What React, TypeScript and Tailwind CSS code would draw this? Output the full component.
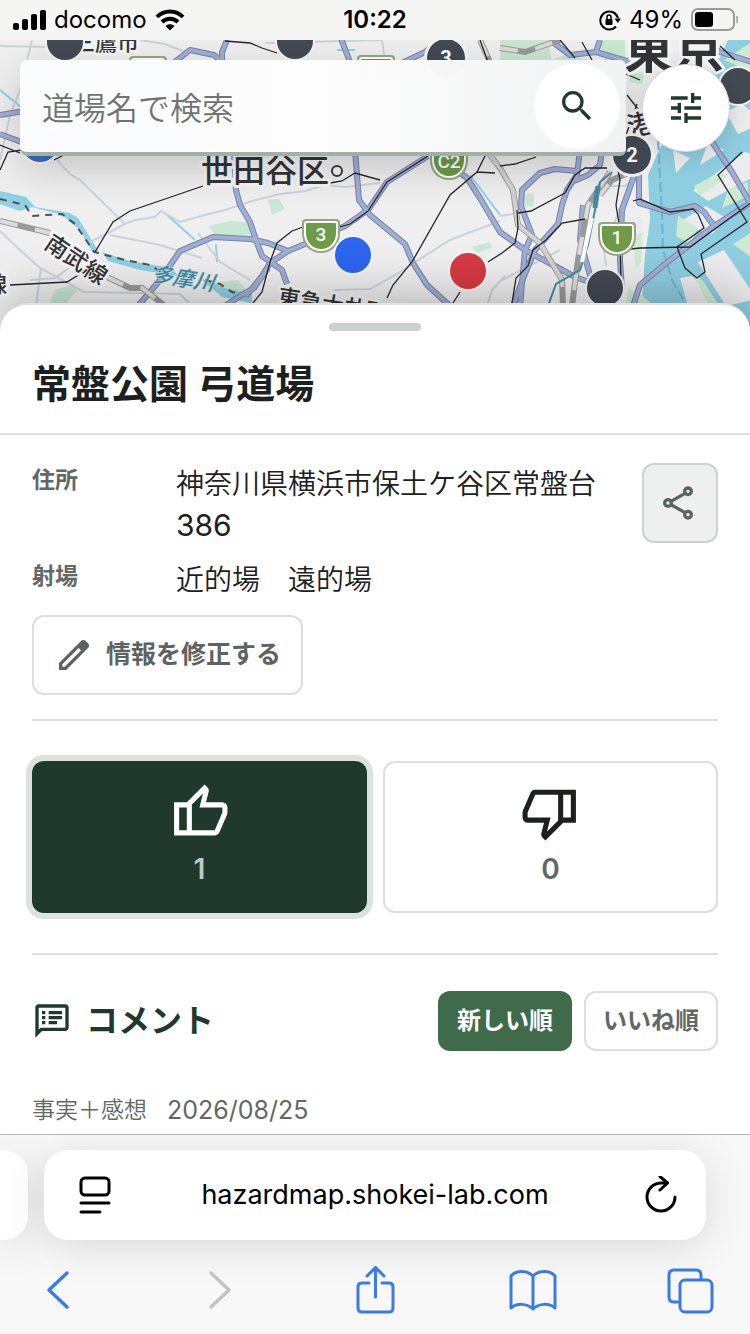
import type { ReactNode } from "react";
import { MdOutlineSpeakerNotes, MdSearch, MdTune } from "react-icons/md";

const highways = [
  "M172 64L190 50L214 55L222 62L222 52L227 40",
  "M0 115L24 111",
  "M0 134L24 143",
  "M340 36L350 62",
  "M400 64L425 52L440 40",
  "M550 40L570 55L596 52L600 40",
  "M596 52L630 62",
  "M700 36L720 52L752 62",
  "M138 306L160 280L180 251L213 237L250 239L268 243L288 251L305 244L345 226L368 210L387 182L428 156",
  "M234 150L236 190L240 205L250 222L256 240L262 256L282 270L287 284",
  "M246 296L262 276L270 263L288 251",
  "M355 150L359 200L370 215L405 244L413 263L427 285L450 306",
  "M225 306L240 296L254 288L268 268",
  "M450 165L467 178L480 198L500 232L525 250L555 266L575 277L592 283",
  "M580 150L577 175L567 190L562 205L558 224L535 250L524 276L513 306",
  "M577 171L555 169L540 173L522 190L521 206L532 235L525 250L520 306",
  "M602 150L600 165L588 175L574 181",
  "M583 205L580 240L590 275L596 290",
  "M634 176L622 210L620 260L622 290",
  "M639 150L639 203L670 212L695 206L704 212L714 226",
  "M752 202L714 226L665 264L640 285L633 306",
  "M712 142L732 172L752 206",
];

const minorRoads = [
  "M32 40L20 90L10 115L0 160",
  "M0 46L50 47",
  "M140 40L165 44L185 52",
  "M265 43L345 41L382 40L385 62",
  "M57 160L70 174L80 180L125 224L135 220L155 217L161 211L180 222L205 215L225 210L252 201L280 194L305 191L325 185L345 187L380 183",
  "M90 242L110 232L125 224",
  "M110 235L160 245L202 258",
  "M198 233L220 262L250 280",
  "M0 231L20 250L40 268L84 292L140 293L180 294L190 304",
  "M36 306L41 268M30 280L55 278L85 256",
  "M325 306L335 290L370 289L395 275L450 240L500 221",
  "M500 216L520 213M500 281L560 250",
  "M487 306L492 290L505 276",
  "M604 186L612 186L625 186L630 182L604 250L606 266",
];

const railLines = [
  "M225 41L250 43L262 48L277 53",
  "M0 170L8 152L22 150M0 145L20 153M54 160L64 155",
  "M95 252L113 222L130 211L203 186",
  "M10 285L67 282L80 274",
  "M253 303L262 292L270 262L277 243L292 231L303 227",
  "M340 227L350 224L368 211L387 182L428 156",
  "M330 183L342 181L355 173L380 180",
  "M387 298L393 285L412 262L450 195L477 172L487 152M477 172L495 173",
  "M453 303L460 292M488 262L502 253L515 243L518 228L517 210",
  "M500 166L515 164L536 157",
  "M518 213L531 211L565 193L575 175L585 168L607 168",
  "M585 219L562 223L546 240L533 250L528 266L516 278L512 303",
  "M617 165L620 180L616 205L620 230L621 290",
  "M622 250L640 248L690 247L752 202",
  "M633 201L640 199L670 212L693 209L698 214L704 228L677 247L685 268L697 278L705 272L701 254L747 222L718 175L742 152",
  "M560 40L575 58M582 42L592 60M626 74L640 80M627 95L645 118M626 135L637 104",
  "M480 40L488 62M640 40L652 60M720 46L735 60",
];

type LabelProps = {
  x: number;
  y: number;
  size: number;
  rotate?: number;
  bold?: boolean;
  river?: boolean;
  children: ReactNode;
};

const MapLabel = ({ x, y, size, rotate = 0, bold, river, children }: LabelProps) => (
  <text
    x={x}
    y={y}
    fontSize={size}
    fontWeight={bold ? 700 : 500}
    fontStyle={river ? "italic" : "normal"}
    transform={`rotate(${rotate} ${x} ${y})`}
    fill={river ? "#3f8ba3" : "#333437"}
    stroke={river ? "#d5e8ee" : "#f5f5f5"}
    strokeWidth={river ? 1 : 6}
    strokeLinejoin="round"
    paintOrder="stroke"
  >
    {children}
  </text>
);

const Shield = ({ x, y, label }: { x: number; y: number; label?: string }) => (
  <g transform={`translate(${x} ${y})`}>
    <path d="M-15 -16H15Q19 -16 19 -12V-2C19 10 11 18 0 18C-11 18 -19 10 -19 -2V-12Q-19 -16 -15 -16Z" fill="#94a884" />
    <path
      d="M-14 -13H14Q16 -13 16 -11V-2C16 8 9 15 0 15C-9 15 -16 8 -16 -2V-11Q-16 -13 -14 -13Z"
      fill="#6f9a47"
      stroke="#fff"
      strokeWidth="2"
    />
    {label && (
      <text y="6" textAnchor="middle" fontSize="19" fontWeight="500" fill="#fff">
        {label}
      </text>
    )}
  </g>
);

const Pin = ({ x, y, color, count }: { x: number; y: number; color: string; count?: number }) => (
  <g transform={`translate(${x} ${y})`}>
    <circle r={count ? 22 : 20} fill="#f4f5f7" />
    <circle r={count ? 19 : 18} fill={color} />
    {count && (
      <text y="7" textAnchor="middle" fontSize="20" fontWeight="700" fill="#fff">
        {count}
      </text>
    )}
  </g>
);

const MapCanvas = () => (
  <svg
    viewBox="0 40 750 291"
    preserveAspectRatio="xMidYMid slice"
    className="absolute inset-0 size-full"
    fontFamily="Roboto, 'Noto Sans CJK JP', sans-serif"
    fill="none"
  >
    <rect y="40" width="750" height="291" fill="#efeff0" />
    {/* parks */}
    <g fill="#c9e7d3">
      <path d="M500 40H548L552 62H500Z" />
      <path d="M598 40H625V62H606Z" />
      <path d="M545 62L565 55L590 60V64H545Z" />
      <path d="M208 226L230 221L250 222V235L215 235Z" />
      <path d="M55 290L74 284L77 291L65 304H50Z" />
      <path d="M205 284L238 280L252 297L215 291Z" />
      <path d="M268 200L279 199L285 209L272 215Z" />
      <path d="M472 247L490 242L492 248L477 253Z" />
      <path d="M526 194L534 193L534 206L524 207Z" />
      <path d="M628 74L645 72L642 84L630 82Z" />
    </g>
    {/* river */}
    <g fill="#8fd0e3">
      <path d="M0 191L26 197L35 207L70 213L78 218L99 252L92 251L80 230L62 215L32 207L20 211L0 204Z" />
      <path d="M102 252L130 261L172 268L178 276L140 270L108 261Z" />
      <path d="M200 278L225 288L252 294V303L222 297Z" />
    </g>
    <path d="M0 90L22 108M165 213L195 240M216 244L217 262M470 175L500 215M337 50L355 50" stroke="#8fd0e3" strokeWidth="2" />
    {/* bay */}
    <path d="M728 40H752V331H640L645 255L650 220L648 175L660 148L700 100Z" fill="#8fcde0" />
    <g fill="#ececee">
      <path d="M673 150L690 158L676 173Z" />
      <path d="M626 217L643 218L640 271L622 269Z" />
      <path d="M708 142L724 150L700 165Z" />
      <path d="M693 190L745 152L752 154V178L708 201Z" />
      <path d="M676 224L706 206L726 218L712 234Z" />
      <path d="M698 262L724 250L752 292V300L726 306Z" />
      <path d="M680 278L692 276L720 306H688Z" />
      <path d="M652 58L700 50L680 66Z" />
      <path d="M726 112L742 104L752 112V128L738 134Z" />
    </g>
    <g fill="#cdebd3">
      <path d="M694 186L720 172L728 176L700 196Z" />
      <path d="M678 216L698 228L690 244L676 236Z" />
      <path d="M728 190L748 182V196L722 208Z" />
      <path d="M692 272L704 282L718 304H708Z" />
      <path d="M733 244L752 232V258Z" />
      <path d="M632 236L643 232L641 262L636 268Z" />
      <path d="M628 288L640 294L652 304H626Z" />
      <path d="M724 60L752 42V72Z" />
    </g>
    <path d="M658 140L662 215L663 250L672 280L686 304" stroke="#6cb3cd" strokeWidth="2" strokeDasharray="10 4" />

    {minorRoads.map((d) => (
      <path key={d} d={d} stroke="#cdd2d9" strokeWidth="2" />
    ))}
    <path
      d="M0 199L25 205L32 216L62 214L75 224L86 240L94 252L125 260L150 265L168 276M205 280L220 284L232 292L252 297"
      stroke="#4f5254"
      strokeWidth="2"
      strokeDasharray="7 6"
    />
    <g strokeLinejoin="round">
      {highways.map((d) => (
        <path key={d} d={d} stroke="#7583ad" strokeWidth="6" />
      ))}
      {highways.map((d) => (
        <path key={d} d={d} stroke="#a0aed0" strokeWidth="4" />
      ))}
    </g>
    {/* JR lines */}
    <path
      d="M0 221L50 233M107 277L130 288L142 288L164 305M486 150L500 168L513 190L518 225L540 243L562 280L563 306M480 40L490 62M500 48L525 52L560 40M610 172L588 205L578 260L572 306M640 168L612 180L600 195"
      stroke="#9a9a9b"
      strokeWidth="6"
    />
    <path
      d="M0 221L50 233M107 277L130 288L142 288L164 305M486 150L500 168L513 190L518 225L540 243L562 280L563 306M480 40L490 62M500 48L525 52L560 40M610 172L588 205L578 260L572 306M640 168L612 180L600 195"
      stroke="#dcdcdc"
      strokeWidth="4"
      strokeDasharray="18 18"
    />
    <path d="M486 150L500 168L513 190L518 225L540 243L562 280" stroke="#d2d2d2" strokeWidth="4" />
    <path d="M612 172L600 182L596 205L588 245L580 270L556 284L548 306" stroke="#428c9d" strokeWidth="2" />
    <path d="M598 186L595 208" stroke="#428c9d" strokeWidth="5" />
    <path d="M592 218L582 262" stroke="#fff" strokeWidth="4" />
    {railLines.map((d) => (
      <path key={d} d={d} stroke="#26272a" strokeWidth="1.3" />
    ))}

    <Shield x={148} y={72} />
    <Shield x={376} y={71} />
    <Shield x={449} y={162} label="C2" />
    <Shield x={321} y={235} label="3" />
    <Shield x={617} y={238} label="1" />

    <MapLabel x={73} y={50} size={22}>三鷹市</MapLabel>
    <MapLabel x={624} y={68} size={50} bold>東京</MapLabel>
    <MapLabel x={630} y={137} size={27} rotate={-14}>港</MapLabel>
    <MapLabel x={201} y={182} size={32}>世田谷区</MapLabel>
    <circle cx="337" cy="171" r="5" fill="#f5f5f5" stroke="#3a3b3e" strokeWidth="2" />
    <MapLabel x={43} y={247} size={23} rotate={34}>南武線</MapLabel>
    <MapLabel x={-15} y={292} size={22}>線</MapLabel>
    <MapLabel x={151} y={281} size={21} rotate={9} river>多摩川</MapLabel>
    <MapLabel x={277} y={304} size={22} rotate={9}>東急大井町線</MapLabel>

    <Pin x={65} y={42} color="#434a54" />
    <Pin x={295} y={41} color="#434a54" />
    <Pin x={446} y={58} color="#434a54" count={3} />
    <Pin x={738} y={86} color="#434a54" />
    <Pin x={632} y={155} color="#434a54" count={2} />
    <Pin x={40} y={144} color="#3a6cc4" />
    <Pin x={353} y={255} color="#2c66ee" />
    <Pin x={468} y={271} color="#d63a44" />
    <Pin x={605} y={288} color="#434a54" />
  </svg>
);

const StatusBar = () => (
  <header className="grid h-10 grid-cols-3 items-center bg-[#f5f5f4] px-3 text-2xl text-black">
    <div className="flex items-center gap-2">
      <svg width="34" height="22" viewBox="0 0 34 22">
        <rect x="1" y="14" width="6" height="7" rx="2" />
        <rect x="10" y="10" width="6" height="11" rx="2" />
        <rect x="19" y="5" width="6" height="16" rx="2" />
        <rect x="28" y="1" width="6" height="20" rx="2" />
      </svg>
      <span>docomo</span>
      <svg width="30" height="22" viewBox="0 0 30 22" fill="none" stroke="#000" strokeWidth="4">
        <path d="M2 8C9 0.500 21 0.500 28 8" />
        <path d="M7 13C11.500 8.500 18.500 8.500 23 13" />
        <path d="M15 21.500L10.500 17C13 14.600 17 14.600 19.500 17Z" fill="#000" stroke="none" />
      </svg>
    </div>
    <time className="text-center font-semibold">10:22</time>
    <div className="flex items-center justify-end gap-2">
      <svg width="22" height="22" viewBox="0 0 22 22" fill="none" stroke="#000" strokeWidth="2">
        <path d="M17 17.500A9 9 0 1 1 19 9" />
        <path d="M15.500 9.500H22L18.800 14Z" fill="#000" stroke="none" />
        <rect x="6.500" y="10" width="7" height="6" rx="1" fill="#000" stroke="none" />
        <path d="M8 10V8A2 2 0 0 1 12 8V10" strokeWidth="1.500" />
      </svg>
      <span>49%</span>
      <svg width="47" height="24" viewBox="0 0 47 24">
        <rect x="1" y="1" width="42" height="21" rx="6" fill="none" stroke="#9b9b9b" strokeWidth="2" />
        <rect x="4" y="4" width="18" height="15" rx="3" />
        <path d="M46 8Q47 11.500 46 15Z" fill="#9b9b9b" stroke="#9b9b9b" />
      </svg>
    </div>
  </header>
);

const ThumbIcon = ({ down }: { down?: boolean }) => (
  <svg viewBox="0 -960 960 960" fill="currentColor" className={down ? "size-[61px] rotate-180" : "size-[61px]"}>
    <path d="M720-120H280v-520l280-280 50 50q7 7 11.500 19t4.500 23v14l-44 174h258q32 0 56 24t24 56v80q0 7-2 15t-4 15L794-168q-9 20-30 34t-44 14Zm-360-80h360l120-280v-80H480l54-220-174 174v406Zm-80-440v80H160v360h120v80H80v-520h200Z" />
  </svg>
);

const toolbar = [
  { label: "戻る", icon: <path d="M33 7L15 24L33 41" strokeWidth="3.500" /> },
  { label: "進む", disabled: true, icon: <path d="M19 7L37 24L19 41" strokeWidth="3.500" /> },
  {
    label: "共有",
    icon: <path d="M18 17H11Q7 17 7 21V42Q7 46 11 46H38Q42 46 42 42V21Q42 17 38 17H31M24.500 31V3M16 10L24.500 1.500L33 10" />,
  },
  {
    label: "ブックマーク",
    icon: <path d="M24 10C18 4 7 4 2 10V42C8 37 18 37 24 43C30 37 40 37 46 42V10C41 4 30 4 24 10ZM24 10V43" />,
  },
  {
    label: "タブ",
    icon: (
      <>
        <path d="M12 36H7Q2 36 2 31V9Q2 4 7 4H29Q34 4 34 9V13" />
        <rect x="13" y="14" width="32" height="32" rx="5" />
      </>
    ),
  },
];

const BrowserBar = () => (
  <footer className="relative h-[200px] overflow-hidden border-t border-[#b4b4b4] bg-[#f8f8f8] pt-[15px] text-black">
    <div className="flex gap-4 pr-11">
      <div className="h-[90px] w-7 rounded-r-3xl bg-white shadow-[0_6px_40px_rgba(0,0,0,0.13)]" />
      <div className="grid h-[90px] flex-1 grid-cols-[1fr_auto_1fr] items-center rounded-3xl bg-white px-6 shadow-[0_6px_40px_rgba(0,0,0,0.13)]">
        <button type="button" aria-label="ページメニュー" className="justify-self-start px-2">
          <svg width="38" height="38" viewBox="0 0 38 38" fill="none" stroke="currentColor" strokeWidth="3" strokeLinecap="round">
            <rect x="5" y="2" width="28" height="17" rx="4" />
            <path d="M5 27H33M5 36H24" />
          </svg>
        </button>
        <button type="button" className="text-[27px]">hazardmap.shokei-lab.com</button>
        <button type="button" aria-label="再読み込み" className="justify-self-end">
          <svg width="38" height="38" viewBox="0 0 38 38" fill="none" stroke="currentColor" strokeWidth="3" strokeLinecap="round" strokeLinejoin="round">
            <path d="M31 21A14 14 0 1 1 17 7H23" />
            <path d="M16 0.500L23.500 7L16 14" />
          </svg>
        </button>
      </div>
    </div>
    <nav className="mt-[26px] flex justify-between pr-[35px] pl-[34px] text-[#3b7be4]">
      {toolbar.map(({ label, icon, disabled }) => (
        <button key={label} type="button" aria-label={label} disabled={disabled} className="disabled:text-[#c3c3c3]">
          <svg width="48" height="48" viewBox="0 0 48 48" fill="none" stroke="currentColor" strokeWidth="3" strokeLinecap="round" strokeLinejoin="round">
            {icon}
          </svg>
        </button>
      ))}
    </nav>
  </footer>
);

const App = () => {
  return (
    <div className="flex min-h-screen flex-col bg-white font-[Inter,'Noto_Sans_CJK_JP',sans-serif] text-[#1c211e]">
      <StatusBar />

      <section className="relative h-[291px] overflow-hidden">
        <MapCanvas />
        <div className="relative flex items-center gap-4 p-5">
          <form className="flex h-24 flex-1 items-center rounded-lg rounded-r-md border-b-4 border-[#a3b0a8] bg-linear-to-r from-[#fbfcff]/99 via-[#fdfdfd]/99 to-[#f1f2f3]/99 pr-1.5 pl-[22px] shadow-[0_12px_40px_rgba(0,0,0,0.18)]">
            <input
              type="search"
              aria-label="道場名で検索"
              placeholder="道場名で検索"
              className="min-w-0 flex-1 pt-1.5 text-[32px] font-[350] outline-none placeholder:text-[#6f7471]"
            />
            <button type="submit" aria-label="検索" className="grid size-[86px] place-items-center rounded-full bg-white text-[#1f3a2d]">
              <MdSearch className="size-10" />
            </button>
          </form>
          <button
            type="button"
            aria-label="絞り込み"
            className="grid size-[88px] place-items-center rounded-full border border-[#d3d8d6] bg-white text-[#1f3a2d] shadow-[0_4px_24px_rgba(0,0,0,0.15)]"
          >
            <MdTune className="size-10" />
          </button>
        </div>
      </section>

      <main className="relative -mt-7 flex-1 rounded-t-[28px] border-t-2 border-[#dfe2e1] bg-white shadow-[0_-8px_48px_rgba(0,0,0,0.25)]">
        <div className="mx-auto mt-[18px] h-2 w-[92px] rounded-full bg-[#cbd1ce]" />
        <h1 className="border-b-2 border-[#dcdfde] px-8 pt-6 pb-5 text-[39px] leading-[58px] font-bold">
          常盤公園 弓道場
        </h1>

        <div className="px-8">
          <section className="border-b-2 border-[#dcdfde] pt-7 pb-6">
            <div className="flex items-start justify-between gap-6">
              <dl className="grid grid-cols-[120px_1fr] gap-x-6 gap-y-3 text-[28px] leading-[42px] font-[350]">
                <dt className="text-[23px] leading-[34px] font-bold text-[#626865]">住所</dt>
                <dd>
                  神奈川県横浜市保土ケ谷区常盤台<span className="text-[30px] leading-none font-normal">386</span>
                </dd>
                <dt className="text-[23px] leading-[34px] font-bold text-[#626865]">射場</dt>
                <dd>近的場　遠的場</dd>
              </dl>
              <button
                type="button"
                aria-label="共有する"
                className="grid h-20 w-[76px] shrink-0 place-items-center rounded-xl border-2 border-[#cdd2d0] bg-[#eef0ef] text-[#5c6461]"
              >
                <svg viewBox="0 0 24 24" fill="none" stroke="currentColor" strokeWidth="2" className="size-10">
                  <path d="M15 6.200L6.600 11M15 17.800L6.600 13" />
                  <circle cx="16.800" cy="5" r="2" />
                  <circle cx="4.800" cy="12" r="2" />
                  <circle cx="16.800" cy="19" r="2" />
                </svg>
              </button>
            </div>
            <button
              type="button"
              className="mt-3.5 flex h-20 items-center gap-3 rounded-xl border-2 border-[#dcdfde] px-5 text-[25px] font-bold text-[#5c6461]"
            >
              <svg viewBox="0 -960 960 960" fill="currentColor" className="size-10">
                <path d="M200-200h57l391-391-57-57-391 391v57Zm-80 80v-170l528-527q12-11 26.500-17t30.500-6q16 0 31 6t26 18l55 56q12 11 17.500 26t5.500 30q0 16-5.500 30.500T817-647L290-120H120Z" />
              </svg>
              情報を修正する
            </button>
          </section>

          <section className="grid grid-cols-2 gap-4 border-b-2 border-[#dcdfde] py-10 text-[28px] leading-8 font-semibold">
            <button
              type="button"
              aria-pressed="true"
              className="flex h-[152px] flex-col items-center justify-center gap-2.5 rounded-xl bg-[#1f392c] pb-2 text-white ring-6 ring-[#dde2e0]"
            >
              <ThumbIcon />
              <span className="text-[#bccbc4]">1</span>
            </button>
            <button
              type="button"
              aria-pressed="false"
              className="flex h-[152px] flex-col items-center justify-center gap-2.5 rounded-xl border-2 border-[#dcdfde] pb-2"
            >
              <ThumbIcon down />
              <span className="text-[#626865]">0</span>
            </button>
          </section>

          <section className="pt-9 pb-[7px]">
            <div className="flex items-center gap-3">
              <MdOutlineSpeakerNotes className="size-10 text-[#1f3a2d]" />
              <h2 className="mr-auto pl-0.5 text-[32px] font-bold text-[#1f3a2d]">コメント</h2>
              <button type="button" className="h-[60px] rounded-xl bg-[#3f6b4b] px-[19px] text-2xl font-bold text-white">
                新しい順
              </button>
              <button type="button" className="h-[60px] rounded-xl border-2 border-[#dcdfde] px-[17px] text-2xl font-bold text-[#626865]">
                いいね順
              </button>
            </div>
            <p className="mt-[42px] flex gap-5 text-[23px] leading-[34px] font-[350] text-[#626865]">
              <span>事実＋感想</span>
              <time className="text-[25px] font-normal">2026/08/25</time>
            </p>
          </section>
        </div>
      </main>

      <BrowserBar />
    </div>
  );
};

export default App;
